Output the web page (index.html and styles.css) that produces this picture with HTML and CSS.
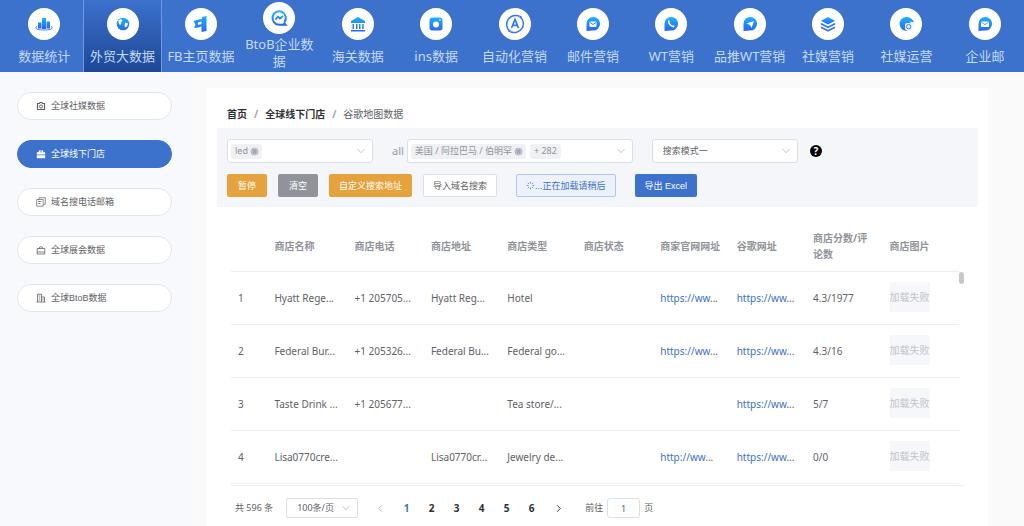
FILE: index.html
```html
<!DOCTYPE html>
<html lang="zh-CN">
<head>
<meta charset="utf-8">
<meta name="viewport" content="width=device-width, initial-scale=1">
<title>谷歌地图数据</title>
<link rel="stylesheet" href="styles.css">
</head>
<body>
<svg class="defs" aria-hidden="true">
  <defs>
    <linearGradient id="blue" x1="0" y1="0" x2="0" y2="1"><stop offset="0" stop-color="#18b4fc"/><stop offset="1" stop-color="#2b63f6"/></linearGradient>
    <symbol id="chevron" viewBox="0 0 10 10"><path d="M1.5 3 5 6.7 8.5 3" fill="none" stroke="#c0c4cc"/></symbol>
    <symbol id="close" viewBox="0 0 10 10"><circle cx="5" cy="5" r="4.3" fill="#b8bcc6"/><path d="M3.4 3.4 6.6 6.6M6.6 3.4 3.4 6.6" stroke="#82868f" stroke-width=".9"/></symbol>
  </defs>
</svg>
<nav class="topnav">
  <a class="topnav-item" href="#"><span class="disc"><svg viewBox="0 0 20 20"><g fill="url(#blue)"><path d="M4 8.500h3.500v6H4zM8 4h4v11H8zM12.500 7.500H16v7h-3.500z"/></g><path d="M3 12.500C-.5 14 3 16 10 16s10.500-2 7-3.500" fill="none" stroke="#3b83f8"/></svg></span><span class="label">数据统计</span></a>
  <a class="topnav-item active" href="#"><span class="disc"><svg viewBox="0 0 20 20"><circle cx="10" cy="10" r="6.300" fill="url(#blue)"/><path d="M5.500 6.500 8 5 9.500 6.500 8 8.500 8.500 10 7 11 5.500 9zM12 8.500 15 9.500 14 12.500 12 13.500 11.500 11.500z" fill="#fff"/></svg></span><span class="label">外贸大数据</span></a>
  <a class="topnav-item" href="#"><span class="disc"><svg viewBox="0 0 20 20"><path d="M11 3 15.500 2v15l-5 1v-5.500l-3.500 1-4 .5 1.500-3L2.500 7l5-1.500L11 5z" fill="url(#blue)"/><path d="M7 8.500 10.500 7.500v2.500L7 11z" fill="#fff"/></svg></span><span class="label">FB主页数据</span></a>
  <a class="topnav-item two-line" href="#"><span class="disc"><svg viewBox="0 0 20 20"><path d="M15.300 14.300A6.700 6.700 0 1 0 10 16.700h6.500l-1.800-2" fill="none" stroke="url(#blue)" stroke-width="2"/><path d="M6.500 11.500 9 8.500 11 10.500 14 8" fill="none" stroke="url(#blue)" stroke-width="1.800"/></svg></span><span class="label">BtoB企业数据</span></a>
  <a class="topnav-item" href="#"><span class="disc"><svg viewBox="0 0 20 20"><path d="M10 3 17 7v2H3V7zM4.500 10H6v5H4.500zM8 10h1.500v5H8zM11 10h1.500v5H11zM14.200 10h1.500v5h-1.500zM3 16h14v1.500H3z" fill="url(#blue)"/></svg></span><span class="label">海关数据</span></a>
  <a class="topnav-item" href="#"><span class="disc"><svg viewBox="0 0 20 20"><rect x="3.500" y="3.500" width="13" height="13" rx="3" fill="url(#blue)"/><circle cx="10" cy="10.500" r="3" fill="#fff"/><circle cx="14" cy="6" r="1" fill="#a8d8ff"/></svg></span><span class="label">ins数据</span></a>
  <a class="topnav-item" href="#"><span class="disc"><svg viewBox="0 0 20 20"><path d="M14.500 2.300A9 9 0 0 0 4.500 17M5.500 17.700A9 9 0 0 0 15.500 3" fill="none" stroke="#3276f3" stroke-width="1.500"/><path d="M6.500 14 10 5.500 13.500 14M7.800 11.300h4.400" fill="none" stroke="#3276f3" stroke-width="1.700"/><circle cx="15.500" cy="3" r="1.200" fill="#3276f3"/><circle cx="4.500" cy="17" r="1.200" fill="#3276f3"/></svg></span><span class="label">自动化营销</span></a>
  <a class="topnav-item" href="#"><span class="disc"><svg viewBox="0 0 20 20"><path d="M3.500 17V10A6.800 6.800 0 1 1 10 16.500z" fill="url(#blue)"/><rect x="6.500" y="7.500" width="7" height="5.500" rx="1.300" fill="#fff"/><path d="M7 8.500 10 10.500 13 8.500" fill="none" stroke="#2f86f8"/></svg></span><span class="label">邮件营销</span></a>
  <a class="topnav-item" href="#"><span class="disc"><svg viewBox="0 0 20 20"><path d="M3.500 17V10A6.800 6.800 0 1 1 10 16.500z" fill="url(#blue)"/><path d="M7.500 6.800c0 3 2.500 5.800 5.500 6" fill="none" stroke="#fff" stroke-width="1.500"/><path d="M7 6.500h1.500v2L7.300 9zM11 12l2-.7.700 1.200-1 1z" fill="#fff"/></svg></span><span class="label">WT营销</span></a>
  <a class="topnav-item" href="#"><span class="disc"><svg viewBox="0 0 20 20"><path d="M3.500 17V10A6.800 6.800 0 1 1 10 16.500z" fill="url(#blue)"/><path d="M6.500 9.500 14 7 11.500 14 10 11z" fill="#fff"/></svg></span><span class="label">品推WT营销</span></a>
  <a class="topnav-item" href="#"><span class="disc"><svg viewBox="0 0 20 20"><path d="M10 3 17 6.700 10 10.400 3 6.700z" fill="url(#blue)"/><path d="M3 9.800 10 13.300 17 9.800M3 13.300 10 16.800 17 13.300" fill="none" stroke="#2c78f8" stroke-width="1.600"/></svg></span><span class="label">社媒营销</span></a>
  <a class="topnav-item" href="#"><span class="disc"><svg viewBox="0 0 20 20"><path d="M18 8.500C16.500 4.500 13.500 3 10 3a6.900 6.900 0 1 0 1 13.800L15 9.500l-1-2z" fill="url(#blue)"/><rect x="9" y="9" width="7.500" height="7.500" rx="2" fill="#e5f2ff"/><circle cx="12.700" cy="12.700" r="2.200" fill="none" stroke="#3386f8"/></svg></span><span class="label">社媒运营</span></a>
  <a class="topnav-item" href="#"><span class="disc"><svg viewBox="0 0 20 20"><path d="M3.500 17V10A6.800 6.800 0 1 1 10 16.500z" fill="url(#blue)"/><rect x="6" y="7.500" width="8" height="5.500" rx=".5" fill="#fff"/><path d="M6.300 8 10 10.700 13.700 8" fill="none" stroke="#2f86f8" stroke-width=".8"/></svg></span><span class="label">企业邮</span></a>
</nav>
<div class="layout">
  <aside class="sidebar">
    <a class="pill" href="#"><svg viewBox="0 0 10 10"><path d="M1.500 2.500h2l.5-1h2l.5 1h2v6h-7z" fill="none" stroke="currentColor" stroke-width="1.200"/><circle cx="5" cy="5.500" r="1.500" fill="none" stroke="currentColor"/></svg>全球社媒数据</a>
    <a class="pill active" href="#"><svg viewBox="0 0 10 10"><path d="M.8 3.200h2V1.500h4.400v1.700h2v2.300H.8zM.8 6.200h8.400v3H.8zM4 2.400v.8h2v-.8z" fill="currentColor" fill-rule="evenodd"/></svg>全球线下门店</a>
    <a class="pill" href="#"><svg viewBox="0 0 10 10"><path d="M3 2.500V.7h6.300v6.600H7.500M.7 2.500h6.500v6.700H.7zM2 4.500h3.500M2 6.500h2.500" fill="none" stroke="currentColor" stroke-width=".7"/></svg>域名搜电话邮箱</a>
    <a class="pill" href="#"><svg viewBox="0 0 10 10"><path d="M1.200 3.500h7.600V9H1.200zM3.200 3.500a1.800 1.800 0 0 1 3.600 0M1.200 7h7.600" fill="none" stroke="currentColor" stroke-width=".8"/></svg>全球展会数据</a>
    <a class="pill" href="#"><svg viewBox="0 0 10 10"><path d="M1.500 9V1.200h4V9M5.500 4h3v5M.5 9h9M2.700 3h1.600M2.700 5h1.600M2.700 7h1.600M7 5.500v2" fill="none" stroke="currentColor" stroke-width=".8"/></svg>全球BtoB数据</a>
  </aside>
  <main class="card">
    <div class="crumbs"><a href="#">首页</a><span class="slash">/</span><a href="#">全球线下门店</a><span class="slash">/</span><span>谷歌地图数据</span></div>
    <section class="filters">
      <div class="fields">
        <div class="field keyword"><span class="tag">led<svg viewBox="0 0 10 10"><use href="#close"/></svg></span><input type="text" aria-label="关键词"><svg class="arrow"><use href="#chevron"/></svg></div>
        <label class="all" for="region">all</label>
        <div class="field region"><span class="tag">美国 / 阿拉巴马 / 伯明罕<svg viewBox="0 0 10 10"><use href="#close"/></svg></span><span class="tag more">+ 282</span><input id="region" type="text"><svg class="arrow"><use href="#chevron"/></svg></div>
        <div class="field mode"><select aria-label="搜索模式"><option>搜索模式一</option></select><svg class="arrow"><use href="#chevron"/></svg></div>
        <button class="help" type="button" aria-label="帮助">?</button>
      </div>
      <div class="actions">
        <button class="btn orange" type="button">暂停</button>
        <button class="btn gray" type="button">清空</button>
        <button class="btn orange snug" type="button">自定义搜索地址</button>
        <button class="btn plain snug" type="button">导入域名搜索</button>
        <button class="btn loading snug" type="button"><svg viewBox="0 0 10 10"><path d="M5 .8v2M5 7.200v2M.8 5h2M7.200 5h2M2 2l1.400 1.400M6.600 6.600 8 8M2 8l1.400-1.400M6.600 3.400 8 2" stroke="currentColor" stroke-width=".8"/></svg>...正在加载请稍后</button>
        <button class="btn blue snug" type="button">导出 Excel</button>
      </div>
    </section>
    <div class="grid">
      <div class="table-wrap">
      <table>
        <colgroup><col class="c-index"><col class="c-name"><col><col><col><col><col><col><col><col></colgroup>
        <thead><tr><th></th><th>商店名称</th><th>商店电话</th><th>商店地址</th><th>商店类型</th><th>商店状态</th><th>商家官网网址</th><th>谷歌网址</th><th class="wrap">商店分数/评论数</th><th>商店图片</th></tr></thead>
        <tbody>
          <tr><td>1</td><td>Hyatt Rege...</td><td>+1 205705...</td><td>Hyatt Reg...</td><td>Hotel</td><td></td><td><a href="#">https://ww</a>...</td><td><a href="#">https://ww</a>...</td><td>4.3/1977</td><td><span class="thumb">加载失败</span></td></tr>
          <tr><td>2</td><td>Federal Bur...</td><td>+1 205326...</td><td>Federal Bu...</td><td>Federal go...</td><td></td><td><a href="#">https://ww</a>...</td><td><a href="#">https://ww</a>...</td><td>4.3/16</td><td><span class="thumb">加载失败</span></td></tr>
          <tr><td>3</td><td>Taste Drink ...</td><td>+1 205677...</td><td></td><td>Tea store/...</td><td></td><td></td><td><a href="#">https://ww</a>...</td><td>5/7</td><td><span class="thumb">加载失败</span></td></tr>
          <tr><td>4</td><td>Lisa0770cre...</td><td></td><td>Lisa0770cr...</td><td>Jewelry de...</td><td></td><td><a href="#">http://ww</a>...</td><td><a href="#">https://ww</a>...</td><td>0/0</td><td><span class="thumb">加载失败</span></td></tr>
        </tbody>
      </table>
      </div>
      <div class="track"><div class="bar"></div></div>
    </div>
    <div class="pager">
      <span>共 596 条</span>
      <div class="field size"><select aria-label="每页条数"><option>100条/页</option></select><svg class="arrow"><use href="#chevron"/></svg></div>
      <div class="pages">
        <button type="button" aria-label="上一页" disabled><svg viewBox="0 0 10 10"><path d="M6.500 1.500 3 5 6.500 8.500" fill="none" stroke="#b4b8c0" stroke-width="1.100"/></svg></button>
        <button class="current" type="button">1</button><button type="button">2</button><button type="button">3</button><button type="button">4</button><button type="button">5</button><button type="button">6</button>
        <button type="button" aria-label="下一页"><svg viewBox="0 0 10 10"><path d="M3.500 1.500 7 5 3.500 8.500" fill="none" stroke="#303133" stroke-width="1.100"/></svg></button>
      </div>
      <label class="jump">前往<input type="text" value="1">页</label>
    </div>
  </main>
</div>
</body>
</html>
```
FILE: styles.css
```css
* { box-sizing: border-box; }
body {
  margin: 0;
  min-height: 100vh;
  display: flex;
  flex-direction: column;
  background: #fafafa;
  color: #606266;
  font: 10px/16px "Noto Sans", "Noto Sans CJK SC", sans-serif;
}
a { color: inherit; text-decoration: none; }
button, input, select { font: inherit; color: inherit; margin: 0; padding: 0; border: 0; background: none; }
svg { flex: none; }
.defs { position: absolute; width: 0; height: 0; }

.topnav { display: flex; height: 72px; padding-left: 5px; background: #3c71cc; }
.topnav-item {
  flex: 1 1 0;
  min-width: 0;
  display: flex;
  flex-direction: column;
  align-items: center;
  justify-content: center;
  gap: 8px;
  color: #c5dbfb;
  font-size: 13px;
  line-height: 17px;
  text-align: center;
  white-space: nowrap;
}
.topnav-item.active {
  background: linear-gradient(#3c71cc, #1c4896);
  box-shadow: inset 1px 0 #7299dd, inset -1px 0 #7299dd;
}
.topnav-item.two-line { gap: 2px; white-space: normal; word-break: break-all; }
.two-line .label { padding: 0 4px; }
.disc { display: grid; place-items: center; width: 32px; height: 32px; border-radius: 50%; background: #fff; flex: none; }
.disc svg { width: 20px; height: 20px; }

.layout { flex: 1; display: flex; padding-right: 36px; }
.sidebar {
  width: 191px;
  margin-right: 15px;
  padding: 20px 19px 20px 17px;
  background: #f8f9fc;
  display: flex;
  flex-direction: column;
  gap: 20px;
}
.pill {
  display: flex;
  align-items: center;
  gap: 5px;
  height: 28px;
  padding-left: 18px;
  border: 1px solid #e4e6ee;
  border-radius: 14px;
  background: #fff;
  font-family: "Liberation Sans", "Noto Sans CJK SC", sans-serif;
  font-size: 9px;
}
.pill svg { width: 10px; height: 10px; }
.pill.active { background: #3c71cc; border-color: #3c71cc; color: #fff; }

.card { flex: 1; min-width: 0; margin-top: 16px; padding: 18px 10px 8px 11px; background: #fff; }
.crumbs { display: flex; gap: 7px; padding-left: 10px; }
.crumbs a { font-weight: 700; color: #303133; }
.slash { color: #a0a4ac; font-weight: 700; }

.filters { margin-top: 6px; padding: 11px 10px 10px; background: #f5f6fa; }
.fields { display: flex; align-items: center; }
.field {
  position: relative;
  display: flex;
  align-items: center;
  height: 24px;
  border: 1px solid #dcdfe6;
  border-radius: 3px;
  background: #fff;
}
.field input { flex: 1; min-width: 0; width: 0; outline: 0; }
.field select { flex: 1; align-self: stretch; min-width: 0; padding-left: 10px; appearance: none; outline: 0; }
.arrow { position: absolute; right: 6px; width: 10px; height: 10px; pointer-events: none; }
.keyword { width: 146px; padding-left: 3px; margin-right: 19px; }
.region { width: 226px; padding-left: 3px; margin: 0 19px 0 3px; font-size: 9px; }
.mode { width: 146px; margin-right: 12px; font-size: 9px; }
.all { font-size: 11px; color: #999ca3; }
.tag {
  display: flex;
  align-items: center;
  gap: 2px;
  height: 15px;
  padding: 0 3px 0 4px;
  border-radius: 3px;
  background: #f0f1f4;
  color: #909399;
  font-size: 9px;
  white-space: nowrap;
}
.tag svg { width: 9px; height: 9px; }
.more { margin-left: 4px; padding: 0 4px; }
.help { width: 12px; height: 12px; border-radius: 50%; background: #000; color: #fff; font-weight: 700; font-size: 10px; line-height: 12px; text-align: center; }

.actions { display: flex; align-items: center; margin-top: 11px; }
.btn {
  display: flex;
  align-items: center;
  height: 23px;
  margin-right: 11px;
  padding: 0 10px;
  border: 1px solid transparent;
  border-radius: 2px;
  color: #fff;
  font: 9px/16px "Liberation Sans", "Noto Sans CJK SC", sans-serif;
  white-space: nowrap;
}
.snug { padding: 0 9px; }
.orange { background: #e6a23c; }
.gray { background: #909399; }
.plain { background: #fff; border-color: #dcdfe6; color: #606266; margin-right: 19px; }
.loading { background: #ecf1fa; border-color: #b1c6eb; color: #3c71cc; margin-right: 19px; }
.loading svg { width: 9px; height: 9px; }
.blue { background: #3c71cc; margin: 0; }

.grid { display: flex; margin: 13px 14px 0; border-bottom: 1px solid #ebeef5; }
.table-wrap { flex: 1; min-width: 0; padding-bottom: 1px; }
table { width: 100%; border-collapse: separate; border-spacing: 0; table-layout: fixed; }
.c-index { width: 5%; }
.c-name { width: 11%; }
th, td { padding: 0 7px; text-align: left; white-space: nowrap; border-bottom: 1px solid #ebeef5; }
th { height: 52px; color: #909399; font-weight: 700; }
th.wrap { white-space: normal; }
td { height: 53px; }
td a { color: #3c71cc; }
.thumb { display: block; width: 40px; height: 30px; margin-bottom: 3px; line-height: 31px; background: #f5f7fa; color: #c0c4cc; }
.track { width: 5px; padding-top: 52px; }
.bar { height: 12px; border-radius: 3px; background: #c8c8c8; }

.pager { display: flex; align-items: center; margin-top: 12px; padding-left: 18px; font-size: 9px; }
.size { width: 72px; height: 20px; margin: 0 8px 0 13px; border-radius: 2px; }
.pages { display: flex; }
.pages button { display: grid; place-items: center; width: 25px; height: 20px; color: #303133; font-size: 10px; font-weight: 700; }
.pages button:first-child, .pages button:last-child { width: 28px; }
.pages svg { width: 9px; height: 9px; }
.pages button.current { color: #3c71cc; }
.jump { display: flex; align-items: center; gap: 4px; margin-left: 13px; }
.jump input { width: 33px; height: 20px; border: 1px solid #dcdfe6; border-radius: 3px; text-align: center; }
```
